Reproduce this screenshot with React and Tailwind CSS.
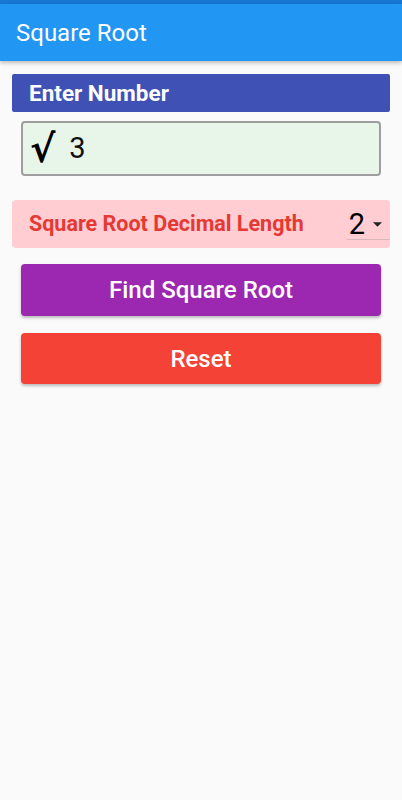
export default function App() {
  return (
    <div className="min-h-[800px] bg-[#fafafa]" style={{ fontFamily: "Roboto, 'Noto Sans', sans-serif" }}>
      <div className="h-[4px] bg-[#1976d2]" />
      <div className="h-[57px] bg-[#2196f3] flex items-center px-4 shadow-[0_2px_4px_rgba(0,0,0,0.25)] relative z-10">
        <span className="text-white text-[24px] leading-none">Square Root</span>
      </div>
      <div className="px-3 pt-[13px]">
        <div className="h-[38px] bg-[#3f51b5] rounded-[2px] flex items-center pl-[17px]">
          <span className="text-white text-[22.5px] font-bold leading-none">Enter Number</span>
        </div>
        <div className="mx-[9px] mt-[9px] h-[55px] border-2 border-[#9e9e9e] rounded-[4px] bg-[#e8f5e9] flex items-center pl-[7px]">
          <span className="text-black text-[38px] font-bold leading-none mr-[14px]" style={{ fontFamily: "'DejaVu Sans', sans-serif" }}>√</span>
          <span className="text-[#111] text-[29px] leading-none">3</span>
        </div>
        <div className="mt-[24px] h-[48px] bg-[#ffcdd2] rounded-[4px] flex items-center justify-between pl-[17px]">
          <span className="text-[#e53935] text-[21.5px] font-bold leading-none">Square Root Decimal Length</span>
          <div className="relative h-full flex items-center pr-[8px] pl-[2px]">
            <span className="text-black text-[29px] leading-none">2</span>
            <svg width="9" height="5" viewBox="0 0 10 5" className="ml-[8px]">
              <path d="M0 0 L10 0 L5 5 Z" fill="#222" />
            </svg>
            <div className="absolute left-0 right-0 bottom-[8px] h-px bg-[#d8b8bb]" />
          </div>
        </div>
        <div className="mx-[9px] mt-[16px] flex flex-col gap-[17px]">
          <button className="h-[52px] bg-[#9c27b0] rounded-[4px] text-white text-[24px] font-medium shadow-[0_2px_3px_rgba(0,0,0,0.25)]">
            Find Square Root
          </button>
          <button className="h-[51px] bg-[#f44336] rounded-[4px] text-white text-[24px] font-medium shadow-[0_2px_3px_rgba(0,0,0,0.25)]">
            Reset
          </button>
        </div>
      </div>
    </div>
  );
}
